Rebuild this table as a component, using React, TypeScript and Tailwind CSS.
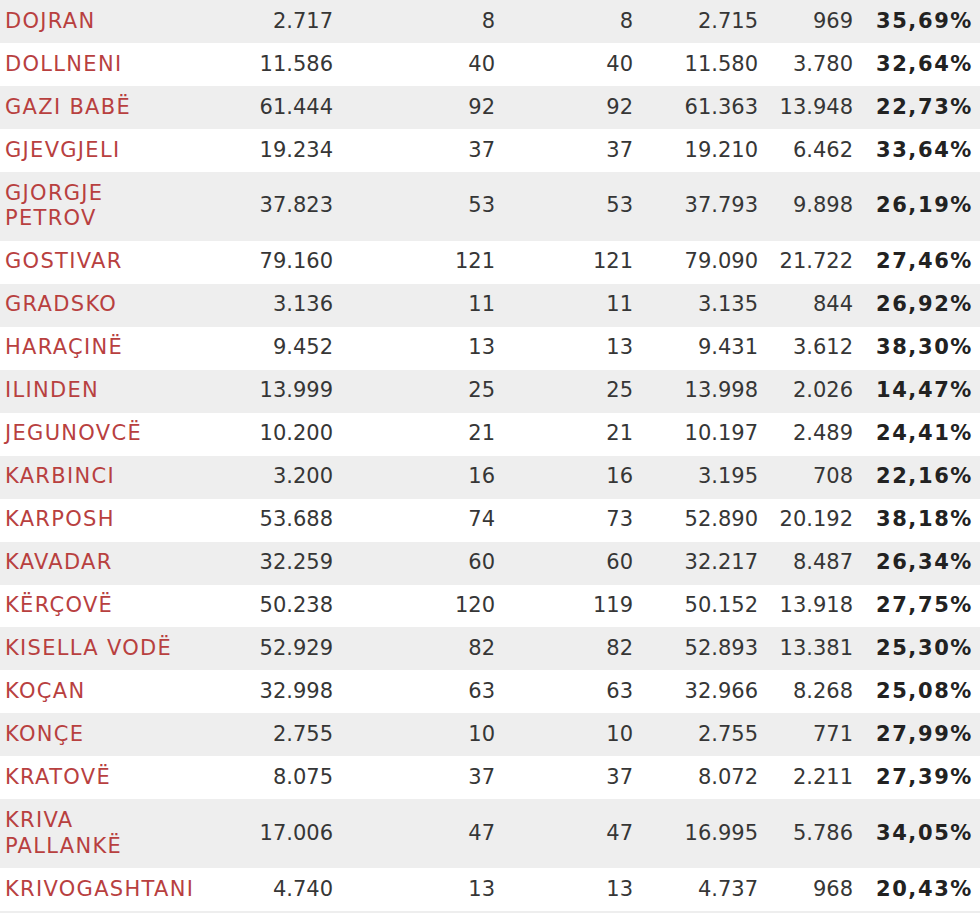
const rows: [string[], string, string, string, string, string, string][] = [
  [["DOJRAN"], "2.717", "8", "8", "2.715", "969", "35,69%"],
  [["DOLLNENI"], "11.586", "40", "40", "11.580", "3.780", "32,64%"],
  [["GAZI BABË"], "61.444", "92", "92", "61.363", "13.948", "22,73%"],
  [["GJEVGJELI"], "19.234", "37", "37", "19.210", "6.462", "33,64%"],
  [["GJORGJE", "PETROV"], "37.823", "53", "53", "37.793", "9.898", "26,19%"],
  [["GOSTIVAR"], "79.160", "121", "121", "79.090", "21.722", "27,46%"],
  [["GRADSKO"], "3.136", "11", "11", "3.135", "844", "26,92%"],
  [["HARAÇINË"], "9.452", "13", "13", "9.431", "3.612", "38,30%"],
  [["ILINDEN"], "13.999", "25", "25", "13.998", "2.026", "14,47%"],
  [["JEGUNOVCË"], "10.200", "21", "21", "10.197", "2.489", "24,41%"],
  [["KARBINCI"], "3.200", "16", "16", "3.195", "708", "22,16%"],
  [["KARPOSH"], "53.688", "74", "73", "52.890", "20.192", "38,18%"],
  [["KAVADAR"], "32.259", "60", "60", "32.217", "8.487", "26,34%"],
  [["KËRÇOVË"], "50.238", "120", "119", "50.152", "13.918", "27,75%"],
  [["KISELLA VODË"], "52.929", "82", "82", "52.893", "13.381", "25,30%"],
  [["KOÇAN"], "32.998", "63", "63", "32.966", "8.268", "25,08%"],
  [["KONÇE"], "2.755", "10", "10", "2.755", "771", "27,99%"],
  [["KRATOVË"], "8.075", "37", "37", "8.072", "2.211", "27,39%"],
  [["KRIVA", "PALLANKË"], "17.006", "47", "47", "16.995", "5.786", "34,05%"],
  [["KRIVOGASHTANI"], "4.740", "13", "13", "4.737", "968", "20,43%"],
];

export default function App() {
  return (
    <div className="w-[980px] bg-white font-['DejaVu_Sans',Verdana,sans-serif] text-[21px] leading-[25.7px] text-[#363636]">
      {rows.map(([name, a, b, c, d, e, pct], i) => (
        <div
          key={name.join(" ")}
          className={`grid grid-cols-[200px_139px_162px_138px_125px_95px_121px] items-center py-[8.65px] ${
            i % 2 === 0 ? "bg-[#eeeeee]" : "bg-white"
          }`}
        >
          <div className="pl-[5px] text-[#b8403f] tracking-[1.3px] whitespace-nowrap">
            {name.map((line) => (
              <div key={line}>{line}</div>
            ))}
          </div>
          <div className="text-right pr-[6px]">{a}</div>
          <div className="text-right pr-[6px]">{b}</div>
          <div className="text-right pr-[6px]">{c}</div>
          <div className="text-right pr-[6px]">{d}</div>
          <div className="text-right pr-[6px]">{e}</div>
          <div className="text-right pr-[7px] font-bold text-[#222222] tracking-[1.6px]">{pct}</div>
        </div>
      ))}
      {/* next row, cut off by the window */}
      <div className="h-[20px] bg-[#eeeeee]" />
    </div>
  );
}
